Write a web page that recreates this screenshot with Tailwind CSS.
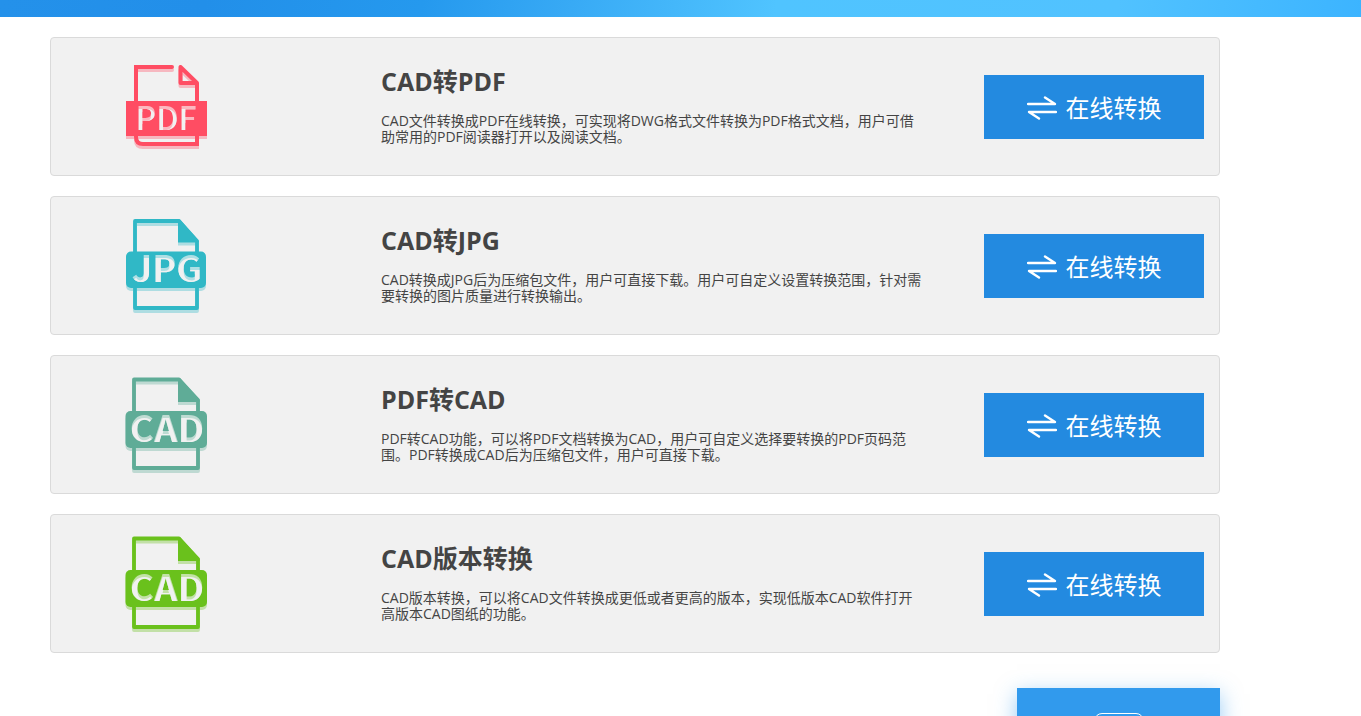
<!DOCTYPE html>
<html lang="zh-CN">

<head>
    <meta charset="UTF-8">
    <meta name="viewport" content="width=device-width, initial-scale=1.0">
    <title>CAD在线转换</title>
    <script src="https://cdn.jsdelivr.net/npm/@tailwindcss/browser@4"></script>
</head>

<body class="h-screen overflow-hidden bg-white text-[#444] font-['Open_Sans','Noto_Sans_CJK_SC',sans-serif]">

    <!-- 共用图形 -->
    <svg class="absolute w-0 h-0" aria-hidden="true">
        <defs>
            <filter id="cut" x="-10%" y="-10%" width="120%" height="120%" color-interpolation-filters="sRGB">
                <feOffset in="SourceAlpha" dy="3" result="low" />
                <feFlood flood-color="#f1f1f1" />
                <feComposite in2="low" operator="in" />
                <feComposite in2="SourceAlpha" operator="in" result="face" />
                <feMerge>
                    <feMergeNode in="SourceGraphic" />
                    <feMergeNode in="face" />
                </feMerge>
            </filter>
            <filter id="drop" x="-10%" y="-10%" width="120%" height="120%" color-interpolation-filters="sRGB">
                <feOffset in="SourceGraphic" dy="3" result="low" />
                <feComponentTransfer in="low" result="pale">
                    <feFuncA type="linear" slope="0.35" />
                </feComponentTransfer>
                <feMerge>
                    <feMergeNode in="pale" />
                    <feMergeNode in="SourceGraphic" />
                </feMerge>
            </filter>
            <symbol id="swap" viewBox="0 0 30 24">
                <path d="M1 8H28L18 1.5M29 16H2L12 22.5" fill="none" stroke="currentColor" stroke-width="2.4"
                    stroke-linecap="round" stroke-linejoin="round" />
            </symbol>
            <symbol id="cad-sheet" viewBox="0 0 84 97">
                <path d="M10 3.5H55L74 24V92H10Z" fill="none" stroke="currentColor" stroke-width="3.8"
                    stroke-linejoin="round" />
                <path d="M54 2H56L75.7 24V26H54Z" fill="currentColor" />
                <rect x="1.5" y="35" width="81.5" height="37" rx="5" fill="currentColor" />
            </symbol>
        </defs>
    </svg>

    <!-- 横幅 -->
    <header class="h-[17px] bg-[linear-gradient(100deg,#2491ea_0%,#228fe9_15%,#2599ee_31%,#38aaf5_42%,#50c4ff_57%,#51c2ff_82%,#3cb4ff_100%)]"></header>

    <main class="max-w-[1170px] mx-[50px] mt-5">
        <div class="flex flex-col gap-5">

            <!-- CAD转PDF -->
            <section class="flex items-center py-5 pr-[15px] bg-[#f1f1f1] border border-[#dadada] rounded">
                <div class="w-[230px] shrink-0 flex justify-center">
                    <svg class="w-[84px] h-[97px] text-[#ff4d63] font-['Noto_Sans_CJK_SC',sans-serif]" viewBox="0 0 84 97">
                        <g filter="url(#drop)">
                            <path d="M48 9H12V79Q12 86 19 86H73V25L56.5 9V25H73" fill="none" stroke="currentColor"
                                stroke-width="4" stroke-linecap="round" stroke-linejoin="round" />
                            <path d="M10 7H14V11H10ZM71 84H75V88H71Z" fill="currentColor" />
                            <rect x="2" y="43" width="81" height="35" fill="currentColor" />
                        </g>
                        <text x="42" y="72" text-anchor="middle" font-size="32" font-weight="500" fill="#fbb8c0"
                            filter="url(#cut)">PDF</text>
                    </svg>
                </div>
                <div class="ml-[100px] w-[550px] pb-0.5">
                    <h2 class="text-[25px] leading-7 font-bold">CAD转PDF</h2>
                    <p class="mt-[18px] text-sm leading-4">CAD文件转换成PDF在线转换，可实现将DWG格式文件转换为PDF格式文档，用户可借<br>助常用的PDF阅读器打开以及阅读文档。</p>
                </div>
                <button type="button"
                    class="ml-auto w-[220px] h-16 pt-0.5 shrink-0 flex items-center justify-center gap-[9px] bg-[#238ae0] text-white text-2xl cursor-pointer">
                    <svg class="w-[30px] h-6"><use href="#swap" /></svg>
                    <span>在线转换</span>
                </button>
            </section>

            <!-- CAD转JPG -->
            <section class="flex items-center py-5 pr-[15px] bg-[#f1f1f1] border border-[#dadada] rounded">
                <div class="w-[230px] shrink-0 flex justify-center">
                    <svg class="w-[84px] h-[97px] text-[#30b8c6] font-['Noto_Sans_CJK_SC',sans-serif]" viewBox="0 0 84 97">
                        <g filter="url(#drop)">
                            <path d="M11 4H55L73 24V91H11Z" fill="none" stroke="currentColor" stroke-width="3.8"
                                stroke-linejoin="round" />
                            <path d="M54 2.5H56L74.7 24V25.5H54Z" fill="currentColor" />
                            <rect x="2" y="34.5" width="80" height="36.5" rx="5" fill="currentColor" />
                        </g>
                        <text x="43" y="65" text-anchor="middle" font-size="36" font-weight="700" fill="#aedfe4"
                            filter="url(#cut)">JPG</text>
                    </svg>
                </div>
                <div class="ml-[100px] w-[550px] pb-0.5">
                    <h2 class="text-[25px] leading-7 font-bold">CAD转JPG</h2>
                    <p class="mt-[18px] text-sm leading-4">CAD转换成JPG后为压缩包文件，用户可直接下载。用户可自定义设置转换范围，针对需<br>要转换的图片质量进行转换输出。</p>
                </div>
                <button type="button"
                    class="ml-auto w-[220px] h-16 pt-0.5 shrink-0 flex items-center justify-center gap-[9px] bg-[#238ae0] text-white text-2xl cursor-pointer">
                    <svg class="w-[30px] h-6"><use href="#swap" /></svg>
                    <span>在线转换</span>
                </button>
            </section>

            <!-- PDF转CAD -->
            <section class="flex items-center py-5 pr-[15px] bg-[#f1f1f1] border border-[#dadada] rounded">
                <div class="w-[230px] shrink-0 flex justify-center">
                    <svg class="w-[84px] h-[97px] text-[#5fac97] font-['Noto_Sans_CJK_SC',sans-serif]" viewBox="0 0 84 97">
                        <use href="#cad-sheet" filter="url(#drop)" />
                        <text x="43" y="66" text-anchor="middle" font-size="37" font-weight="700" fill="#bedbd2"
                            filter="url(#cut)">CAD</text>
                    </svg>
                </div>
                <div class="ml-[100px] w-[550px] pb-0.5">
                    <h2 class="text-[25px] leading-7 font-bold">PDF转CAD</h2>
                    <p class="mt-[18px] text-sm leading-4">PDF转CAD功能，可以将PDF文档转换为CAD，用户可自定义选择要转换的PDF页码范<br>围。PDF转换成CAD后为压缩包文件，用户可直接下载。</p>
                </div>
                <button type="button"
                    class="ml-auto w-[220px] h-16 pt-0.5 shrink-0 flex items-center justify-center gap-[9px] bg-[#238ae0] text-white text-2xl cursor-pointer">
                    <svg class="w-[30px] h-6"><use href="#swap" /></svg>
                    <span>在线转换</span>
                </button>
            </section>

            <!-- CAD版本转换 -->
            <section class="flex items-center py-5 pr-[15px] bg-[#f1f1f1] border border-[#dadada] rounded">
                <div class="w-[230px] shrink-0 flex justify-center">
                    <svg class="w-[84px] h-[97px] text-[#6ac11c] font-['Noto_Sans_CJK_SC',sans-serif]" viewBox="0 0 84 97">
                        <use href="#cad-sheet" filter="url(#drop)" />
                        <text x="43" y="66" text-anchor="middle" font-size="37" font-weight="700" fill="#c2e2a6"
                            filter="url(#cut)">CAD</text>
                    </svg>
                </div>
                <div class="ml-[100px] w-[550px] pb-0.5">
                    <h2 class="text-[25px] leading-7 font-bold">CAD版本转换</h2>
                    <p class="mt-[18px] text-sm leading-4">CAD版本转换，可以将CAD文件转换成更低或者更高的版本，实现低版本CAD软件打开<br>高版本CAD图纸的功能。</p>
                </div>
                <button type="button"
                    class="ml-auto w-[220px] h-16 pt-0.5 shrink-0 flex items-center justify-center gap-[9px] bg-[#238ae0] text-white text-2xl cursor-pointer">
                    <svg class="w-[30px] h-6"><use href="#swap" /></svg>
                    <span>在线转换</span>
                </button>
            </section>
        </div>

        <!-- 底部浮动卡片 -->
        <aside class="mt-[35px] ml-auto w-[203px] h-40 pt-[25px] bg-[#319aed] shadow-[0_6px_20px_rgba(49,154,237,0.5)]">
            <div class="mx-auto w-[50px] h-12 border border-white rounded-lg"></div>
        </aside>
    </main>

</body>

</html>
